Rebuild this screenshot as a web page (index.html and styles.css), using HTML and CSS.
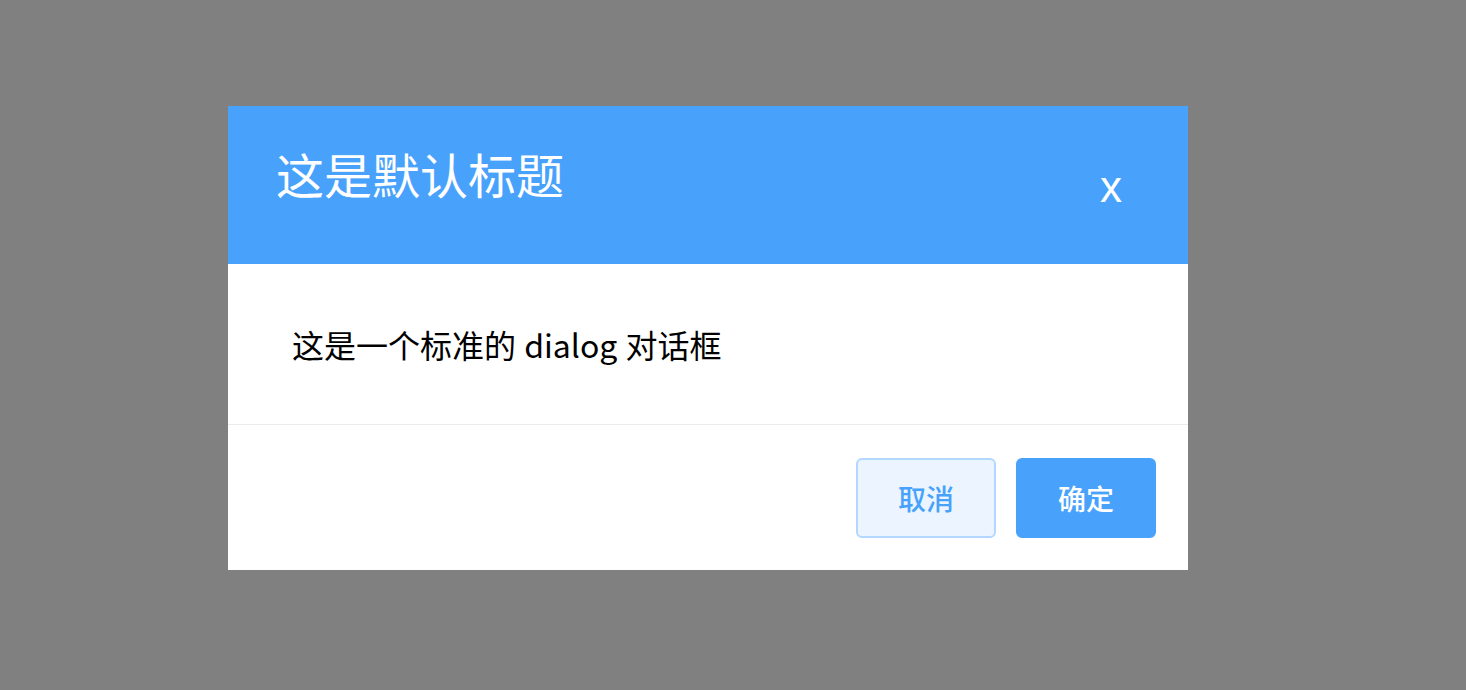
FILE: index.html
```html
<!DOCTYPE html>
<html lang="zh-CN">
<head>
    <meta charset="UTF-8">
    <meta name="viewport" content="width=device-width, initial-scale=1.0">
    <title>Dialog</title>
    <link rel="stylesheet" href="styles.css">
</head>
<body>
    <div class="mask">
        <div class="dialog">
            <div class="dialog-header">
                <span class="dialog-title">这是默认标题</span>
                <span class="dialog-close">x</span>
            </div>
            <div class="dialog-body">这是一个标准的 dialog 对话框</div>
            <div class="dialog-footer">
                <button class="btn btn-plain">取消</button>
                <button class="btn btn-primary">确定</button>
            </div>
        </div>
    </div>
</body>
</html>
```
FILE: styles.css
```css
* {
    box-sizing: border-box;
}
body {
    margin: 0;
    font-family: "Noto Sans CJK SC", "Noto Sans", sans-serif;
}
.mask {
    width: 1466px;
    height: 690px;
    background-color: #808080;
    padding-top: 106px;
    padding-left: 228px;
}
.dialog {
    width: 960px;
    background-color: #fff;
}
.dialog-header {
    height: 158px;
    background-color: #48a2fc;
    color: #fff;
    display: flex;
    justify-content: space-between;
    align-items: flex-start;
    padding: 43px 66px 0 48px;
}
.dialog-title {
    font-size: 48px;
    line-height: 48px;
}
.dialog-close {
    font-family: "Liberation Sans", sans-serif;
    font-size: 44px;
    line-height: 44px;
    margin-top: 16px;
    cursor: pointer;
}
.dialog-body {
    height: 161px;
    padding: 60px 64px 0;
    font-size: 32px;
    line-height: 40px;
    color: #000;
    word-spacing: 1px;
    border-bottom: 1px solid #ebebeb;
}
.dialog-footer {
    display: flex;
    justify-content: flex-end;
    gap: 20px;
    padding: 33px 32px 32px;
}
.btn {
    width: 140px;
    height: 80px;
    border-radius: 6px;
    font-family: inherit;
    font-size: 28px;
    font-weight: 500;
    cursor: pointer;
}
.btn-plain {
    background-color: #ecf5ff;
    border: 2px solid #b3d8ff;
    color: #48a2fc;
}
.btn-primary {
    background-color: #48a2fc;
    border: 2px solid #48a2fc;
    color: #fff;
}
```
